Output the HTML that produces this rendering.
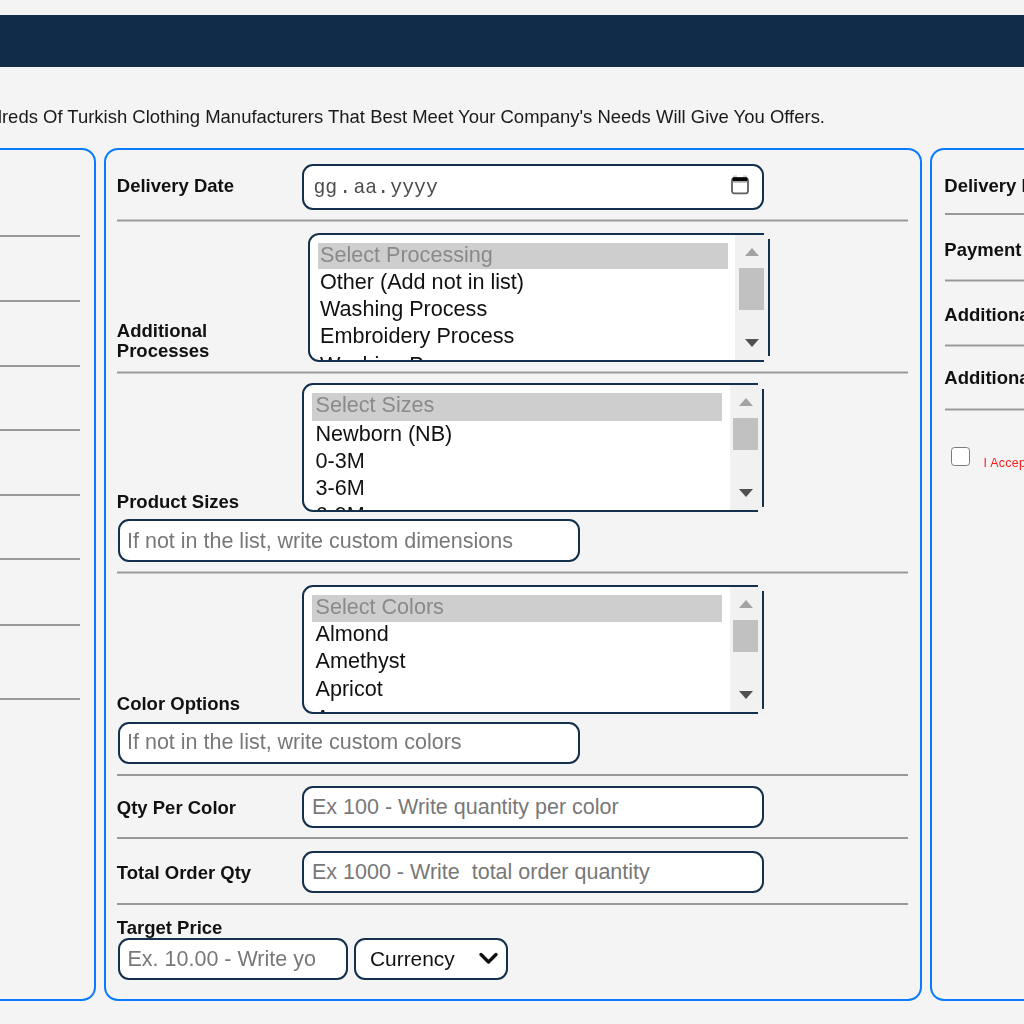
<!DOCTYPE html>
<html lang="en">
<head>
<meta charset="utf-8">
<title>Request Offers</title>
<style>
html,body{margin:0;padding:0;}
html{background:#f4f4f4;}
body{width:1024px;height:1024px;overflow:hidden;position:relative;background:#f4f4f4;
  font-family:"Liberation Sans",Arial,sans-serif;color:#111;}
*{box-sizing:border-box;}
.abs{position:absolute;}
.header{left:0;top:15px;width:1024px;height:52px;background:#112c49;}
.intro{right:199px;top:107px;white-space:nowrap;font-size:18.48px;letter-spacing:0;line-height:20px;color:#1a1a1a;}
.panel{border:2px solid #0a7bff;border-radius:14px;background:#f4f4f4;}
.hr{height:2px;background:#999;}
.hr3{height:3px;background:linear-gradient(#c9c9c9 0,#c9c9c9 1px,#979797 1px,#979797 2px,#c9c9c9 2px,#c9c9c9 3px);}
.lbl{font-weight:bold;font-size:18.5px;line-height:21px;white-space:nowrap;color:#111;}
.inp{border:2px solid #13304d;border-radius:11px;background:#fff;height:42px;}
.ph{font-size:21.5px;letter-spacing:0;color:#787878;white-space:nowrap;line-height:24px;}
.list{border:2px solid #13304d;border-radius:11px 6px 6px 11px;background:#fff;overflow:hidden;}
.list .track{position:absolute;top:0;right:0;bottom:0;width:32px;background:#f1f1f1;}
.list .thumb{position:absolute;left:3px;width:25px;background:#c1c1c1;}
.list .sel{position:absolute;background:#cecece;}
.opt{position:absolute;font-size:21.6px;letter-spacing:0;line-height:24px;white-space:nowrap;color:#111;}
.opt.dis{color:#8a8a8a;}
.dt{top:176px;font-family:'Liberation Mono','DejaVu Sans Mono',monospace;font-size:19.8px;line-height:24px;color:#4d4d4d;white-space:nowrap;}
.arr{position:absolute;left:9px;width:14px;height:8px;}
.corner{background:#f2f2f2;}
</style>
</head>
<body>
<div id="page" style="position:absolute;left:-20px;top:-20px;width:1064px;height:1064px;filter:blur(.45px);"><div style="position:absolute;left:20px;top:20px;width:1024px;height:1024px;">

<div class="abs header"></div>
<div class="abs intro">Hundreds Of Turkish Clothing Manufacturers That Best Meet Your Company's Needs Will Give You Offers.</div>

<!-- left panel -->
<div class="abs panel" style="left:-40px;top:148px;width:136px;height:853px;"></div>
<div class="abs hr" style="left:-10px;width:90px;top:235px;"></div>
<div class="abs hr" style="left:-10px;width:90px;top:300px;"></div>
<div class="abs hr" style="left:-10px;width:90px;top:365px;"></div>
<div class="abs hr" style="left:-10px;width:90px;top:429px;"></div>
<div class="abs hr" style="left:-10px;width:90px;top:494px;"></div>
<div class="abs hr" style="left:-10px;width:90px;top:558px;"></div>
<div class="abs hr" style="left:-10px;width:90px;top:624px;"></div>
<div class="abs hr" style="left:-10px;width:90px;top:698px;"></div>

<!-- middle panel -->
<div class="abs panel" style="left:104px;top:148px;width:818px;height:853px;"></div>

<!-- row 1: delivery date -->
<div class="abs lbl" style="left:116.8px;top:175px;">Delivery Date</div>
<div class="abs inp" style="left:302px;top:163.5px;width:462px;height:46px;"></div>
<div class="abs dt" style="left:313.5px;">gg</div>
<div class="abs dt" style="left:339.3px;">.</div>
<div class="abs dt" style="left:353.5px;">aa</div>
<div class="abs dt" style="left:377.3px;">.</div>
<div class="abs dt" style="left:390.3px;">yyyy</div>
<svg class="abs" style="left:731px;top:175px;" width="18" height="20" viewBox="0 0 18 20"><rect x="2.3" y="0.4" width="3.7" height="2.2" fill="#cfcfcf"/><rect x="12.2" y="0.4" width="3.7" height="2.2" fill="#cfcfcf"/><rect x="1" y="3.3" width="16" height="15" rx="2.2" fill="#fff" stroke="#5e5e5e" stroke-width="1.8"/><rect x="1.9" y="5.6" width="14.2" height="2.1" fill="#a8a8a8"/><rect x="1.6" y="2.3" width="14.8" height="3.6" rx=".6" fill="#050505"/></svg>
<div class="abs hr3" style="left:117px;width:791px;top:219px;"></div>

<!-- row 2: additional processes -->
<div class="abs lbl" style="left:116.8px;top:320.5px;line-height:20.8px;">Additional<br>Processes</div>
<div class="abs list" style="left:308px;top:233px;width:462px;height:128.5px;">
  <div class="sel" style="left:7.5px;top:8px;width:410px;height:26px;"></div>
  <div class="opt dis" style="left:10px;top:7.5px;">Select Processing</div>
  <div class="opt" style="left:10px;top:34.5px;">Other (Add not in list)</div>
  <div class="opt" style="left:10px;top:61.5px;">Washing Process</div>
  <div class="opt" style="left:10px;top:88.5px;">Embroidery Process</div>
  <div class="opt" style="left:10px;top:117.5px;">Washing Process</div>
  <div class="track" style="width:33px;">
    <svg class="arr" style="top:13px;left:9.5px;" viewBox="0 0 14 8"><path d="M0 8 L7 0 L14 8 Z" fill="#a3a3a3"/></svg>
    <div class="thumb" style="top:32.5px;height:42px;left:4px;"></div>
    <svg class="arr" style="top:104px;left:9.5px;" viewBox="0 0 14 8"><path d="M0 0 L7 8 L14 0 Z" fill="#505050"/></svg>
  </div>
</div>
<div class="abs corner" style="left:764px;top:232px;width:7px;height:6.5px;"></div>
<div class="abs corner" style="left:764px;top:356px;width:7px;height:6.5px;"></div>
<div class="abs hr3" style="left:117px;width:791px;top:371px;"></div>

<!-- row 3: product sizes -->
<div class="abs lbl" style="left:116.8px;top:491px;">Product Sizes</div>
<div class="abs list" style="left:302px;top:383px;width:462px;height:129px;">
  <div class="sel" style="left:8px;top:8px;width:410px;height:28px;"></div>
  <div class="opt dis" style="left:11.5px;top:7.5px;">Select Sizes</div>
  <div class="opt" style="left:11.5px;top:36.5px;">Newborn (NB)</div>
  <div class="opt" style="left:11.5px;top:63.5px;">0-3M</div>
  <div class="opt" style="left:11.5px;top:90.5px;">3-6M</div>
  <div class="opt" style="left:11.5px;top:117.5px;">6-9M</div>
  <div class="track">
    <svg class="arr" style="top:13px;" viewBox="0 0 14 8"><path d="M0 8 L7 0 L14 8 Z" fill="#a3a3a3"/></svg>
    <div class="thumb" style="top:33px;height:32px;"></div>
    <svg class="arr" style="top:104px;" viewBox="0 0 14 8"><path d="M0 0 L7 8 L14 0 Z" fill="#505050"/></svg>
  </div>
</div>
<div class="abs corner" style="left:758px;top:382px;width:7px;height:6.5px;"></div>
<div class="abs corner" style="left:758px;top:506.5px;width:7px;height:6.5px;"></div>
<div class="abs inp" style="left:117.5px;top:519px;width:462px;height:43px;"></div>
<div class="abs ph" style="left:127px;top:529px;">If not in the list, write custom dimensions</div>
<div class="abs hr3" style="left:117px;width:791px;top:571px;"></div>

<!-- row 4: color options -->
<div class="abs lbl" style="left:116.8px;top:693px;">Color Options</div>
<div class="abs list" style="left:302px;top:585px;width:462px;height:129px;">
  <div class="sel" style="left:8px;top:8px;width:410px;height:27px;"></div>
  <div class="opt dis" style="left:11.5px;top:7.5px;">Select Colors</div>
  <div class="opt" style="left:11.5px;top:34.5px;">Almond</div>
  <div class="opt" style="left:11.5px;top:61.5px;">Amethyst</div>
  <div class="opt" style="left:11.5px;top:89.5px;">Apricot</div>
  <div class="opt" style="left:11.5px;top:118.5px;">Aqua</div>
  <div class="track">
    <svg class="arr" style="top:13px;" viewBox="0 0 14 8"><path d="M0 8 L7 0 L14 8 Z" fill="#a3a3a3"/></svg>
    <div class="thumb" style="top:33px;height:32px;"></div>
    <svg class="arr" style="top:104px;" viewBox="0 0 14 8"><path d="M0 0 L7 8 L14 0 Z" fill="#505050"/></svg>
  </div>
</div>
<div class="abs corner" style="left:758px;top:584px;width:7px;height:6.5px;"></div>
<div class="abs corner" style="left:758px;top:708.5px;width:7px;height:6.5px;"></div>
<div class="abs inp" style="left:117.5px;top:722px;width:462px;"></div>
<div class="abs ph" style="left:127px;top:730px;">If not in the list, write custom colors</div>
<div class="abs hr" style="left:117px;width:791px;top:774px;"></div>

<!-- row 5: qty per color -->
<div class="abs lbl" style="left:116.8px;top:797px;">Qty Per Color</div>
<div class="abs inp" style="left:302px;top:785.5px;width:462px;"></div>
<div class="abs ph" style="left:312px;top:794.5px;">Ex 100 - Write quantity per color</div>
<div class="abs hr" style="left:117px;width:791px;top:837px;"></div>

<!-- row 6: total order qty -->
<div class="abs lbl" style="left:116.8px;top:862px;">Total Order Qty</div>
<div class="abs inp" style="left:302px;top:851px;width:462px;"></div>
<div class="abs ph" style="left:312px;top:860px;">Ex 1000 - Write&nbsp; total order quantity</div>
<div class="abs hr" style="left:117px;width:791px;top:903px;"></div>

<!-- row 7: target price -->
<div class="abs lbl" style="left:116.8px;top:916.5px;">Target Price</div>
<div class="abs inp" style="left:117.5px;top:937.5px;width:230.5px;"></div>
<div class="abs ph" style="left:127.5px;top:947px;">Ex. 10.00 - Write yo</div>
<div class="abs inp" style="left:354px;top:937.5px;width:154px;"></div>
<div class="abs" style="left:370px;top:947px;font-size:20.9px;letter-spacing:0;line-height:24px;color:#111;white-space:nowrap;">Currency</div>
<svg class="abs" style="left:478px;top:951px;" width="21" height="15" viewBox="0 0 21 15"><path d="M3 3.5 L10.5 11 L18 3.5" fill="none" stroke="#111" stroke-width="3.4" stroke-linecap="round" stroke-linejoin="round"/></svg>

<!-- right panel -->
<div class="abs panel" style="left:929.5px;top:148px;width:200px;height:853px;"></div>
<div class="abs lbl" style="left:944.3px;top:175px;">Delivery Place</div>
<div class="abs hr" style="left:945px;width:100px;top:213px;"></div>
<div class="abs lbl" style="left:944.3px;top:238.5px;">Payment Terms</div>
<div class="abs hr3" style="left:945px;width:100px;top:279px;"></div>
<div class="abs lbl" style="left:944.3px;top:303.5px;">Additional Notes</div>
<div class="abs hr3" style="left:945px;width:100px;top:344px;"></div>
<div class="abs lbl" style="left:944.3px;top:367px;">Additional Files</div>
<div class="abs hr3" style="left:945px;width:100px;top:408px;"></div>
<div class="abs" style="left:951px;top:447px;width:19px;height:19px;border:1.5px solid #7a7a7a;border-radius:3.5px;background:#fff;"></div>
<div class="abs" style="left:983.5px;top:456px;font-size:12.4px;line-height:15px;letter-spacing:.3px;color:#ff1a1a;white-space:nowrap;">I Accept The Terms And Conditions</div>

</div></div>
</body>
</html>
